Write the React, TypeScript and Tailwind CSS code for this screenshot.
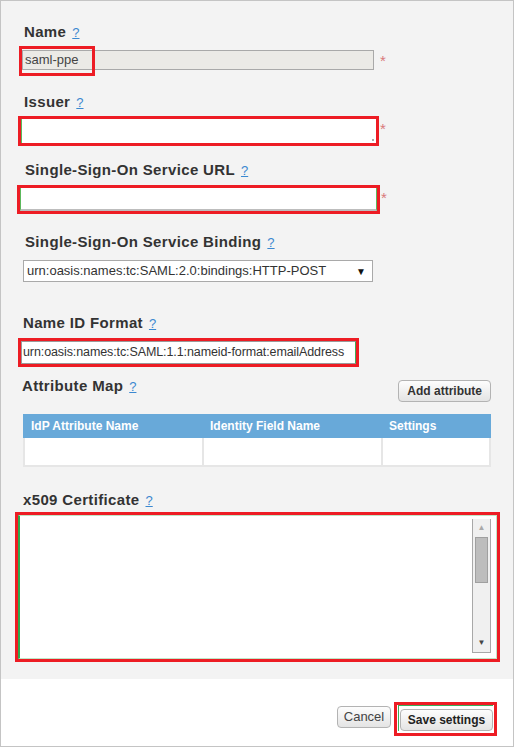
import React from "react";

const Help = () => (
  <span className="ml-[6px] text-[13px] font-normal tracking-normal text-[#3b88d0] underline">?</span>
);

const Star = ({ className = "" }: { className?: string }) => (
  <span className={"text-[15px] leading-none text-[#d9797a] " + className}>*</span>
);

const Label = ({ text, className = "" }: { text: string; className?: string }) => (
  <div className={"h-[18px] text-[15px] leading-[18px] font-bold tracking-[0.35px] text-[#333] " + className}>
    {text}
    <Help />
  </div>
);

const Scrollbar = () => (
  <div className="mt-[3px] mb-[5px] mr-[5px] flex w-[19px] flex-col border-x border-b border-[#a8a8a8] bg-[#f0f0f0]">
    <div className="flex h-[18px] items-center justify-center text-[8px] leading-none text-[#a9a9a9]">▲</div>
    <div className="mx-[2px] h-[46px] border border-[#a0a0a0] bg-[#bdbdbd]"></div>
    <div className="flex-1"></div>
    <div className="flex h-[18px] items-center justify-center text-[8px] leading-none text-[#444]">▼</div>
  </div>
);

export default function App() {
  return (
    <div className="h-[747px] w-[514px] border border-[#c4c4c4] bg-white font-['Liberation_Sans',Arial,sans-serif] text-[#333]">
      <div className="h-[678px] bg-[#f3f3f3] pl-[21px] pt-[22px]">
        {/* Name */}
        <Label text="Name" className="ml-[2px]" />
        <div className="relative mt-[9px] flex items-start">
          <div className="h-[20px] w-[352px] border border-[#a9a9a9] bg-[#ebeae6] px-[2px] text-[13px] leading-[18px] text-[#444]">
            saml-ppe
          </div>
          <Star className="ml-[6px] mt-[3px]" />
          <div className="absolute left-[-3px] top-[-4px] h-[30px] w-[76px] border-[3px] border-[#ed1c24]"></div>
        </div>

        {/* Issuer */}
        <Label text="Issuer" className="ml-[2px] mt-[23px]" />
        <div className="mt-[5px] ml-[-4px] flex items-start">
          <div className="h-[30px] w-[361px] border-[3px] border-[#ed1c24]">
            <div className="relative h-full w-full border-l border-[#5cb85c] bg-white">
              <div className="absolute bottom-[2px] right-[2px] h-[2px] w-[2px] bg-[#aaa]"></div>
            </div>
          </div>
          <Star className="ml-[1px] mt-[5px]" />
        </div>

        {/* SSO URL */}
        <Label text="Single-Sign-On Service URL" className="ml-[3px] mt-[15px]" />
        <div className="mt-[6px] ml-[-5px] flex items-start">
          <div className="h-[29px] w-[363px] border-[3px] border-[#ed1c24]">
            <div className="h-full w-full border-b-2 border-l border-r border-[#bdbdbd] border-l-[#5cb85c] border-r-[#5cb85c] bg-white"></div>
          </div>
          <Star className="ml-[1px] mt-[5px]" />
        </div>

        {/* SSO Binding */}
        <Label text="Single-Sign-On Service Binding" className="ml-[3px] mt-[19px]" />
        <div className="mt-[9px] ml-[1px] flex h-[22px] w-[350px] items-center justify-between border border-[#a9a9a9] bg-white pl-[3px] pr-[6px] text-[13px] text-[#333]">
          <span className="whitespace-nowrap">urn:oasis:names:tc:SAML:2.0:bindings:HTTP-POST</span>
          <span className="text-[10px] text-[#111]">▼</span>
        </div>

        {/* Name ID Format */}
        <Label text="Name ID Format" className="ml-[1px] mt-[32px]" />
        <div className="mt-[6px] ml-[-4px] h-[29px] w-[341px] border-[3px] border-[#ed1c24] bg-white">
          <div className="h-full w-full overflow-hidden whitespace-nowrap border border-[#9a9a9a] border-r-[#3cae5a] pl-[1px] text-[12.5px] leading-[21px] tracking-[-0.1px] text-[#333]">
            urn:oasis:names:tc:SAML:1.1:nameid-format:emailAddress
          </div>
        </div>

        {/* Attribute Map */}
        <div className="mt-[10px] flex w-[469px] items-start justify-between">
          <Label text="Attribute Map" />
          <button className="mt-[3px] h-[22px] rounded-[4px] border border-[#b3b3b3] bg-gradient-to-b from-[#fdfdfd] to-[#e4e4e4] px-[8px] text-[12px] font-bold text-[#333]">
            Add attribute
          </button>
        </div>

        <div className="mt-[12px] ml-[1px] w-[468px] text-[12px]">
          <div className="flex h-[24px] items-center bg-[#68a9d9] font-bold text-white">
            <div className="w-[179px] pl-[8px]">IdP Attribute Name</div>
            <div className="w-[179px] pl-[8px]">Identity Field Name</div>
            <div className="flex-1 pl-[8px]">Settings</div>
          </div>
          <div className="flex h-[29px] gap-[2px] bg-[#e6e6e6] px-[2px] pb-[2px]">
            <div className="w-[177px] bg-white"></div>
            <div className="w-[177px] bg-white"></div>
            <div className="flex-1 bg-white"></div>
          </div>
        </div>

        {/* x509 */}
        <Label text="x509 Certificate" className="ml-[1px] mt-[24px]" />
        <div className="mt-[3px] ml-[-7px] h-[150px] w-[485px] border-[3px] border-[#ed1c24]">
          <div className="flex h-full w-full justify-end border border-l-2 border-[#bfe6c6] border-l-[#2eaa4f] bg-white">
            <Scrollbar />
          </div>
        </div>
      </div>

      {/* Footer */}
      <div className="flex items-start justify-end pr-[16px] pt-[23px]">
        <button className="mt-[4px] h-[22px] w-[54px] rounded-[4px] border border-[#b3b3b3] bg-gradient-to-b from-[#fdfdfd] to-[#e4e4e4] text-[13px] text-[#444]">
          Cancel
        </button>
        <div className="ml-[3px] border-[3px] border-[#ed1c24] px-[1px] pt-0 pb-[2px]">
          <div className="border-t border-l border-[#3cae5a] pl-[1px] pt-[1px]">
            <button className="h-[22px] w-[93px] rounded-[4px] border border-[#b3b3b3] bg-gradient-to-b from-[#fdfdfd] to-[#e4e4e4] text-[12px] font-bold text-[#222]">
              Save settings
            </button>
          </div>
        </div>
      </div>
    </div>
  );
}
